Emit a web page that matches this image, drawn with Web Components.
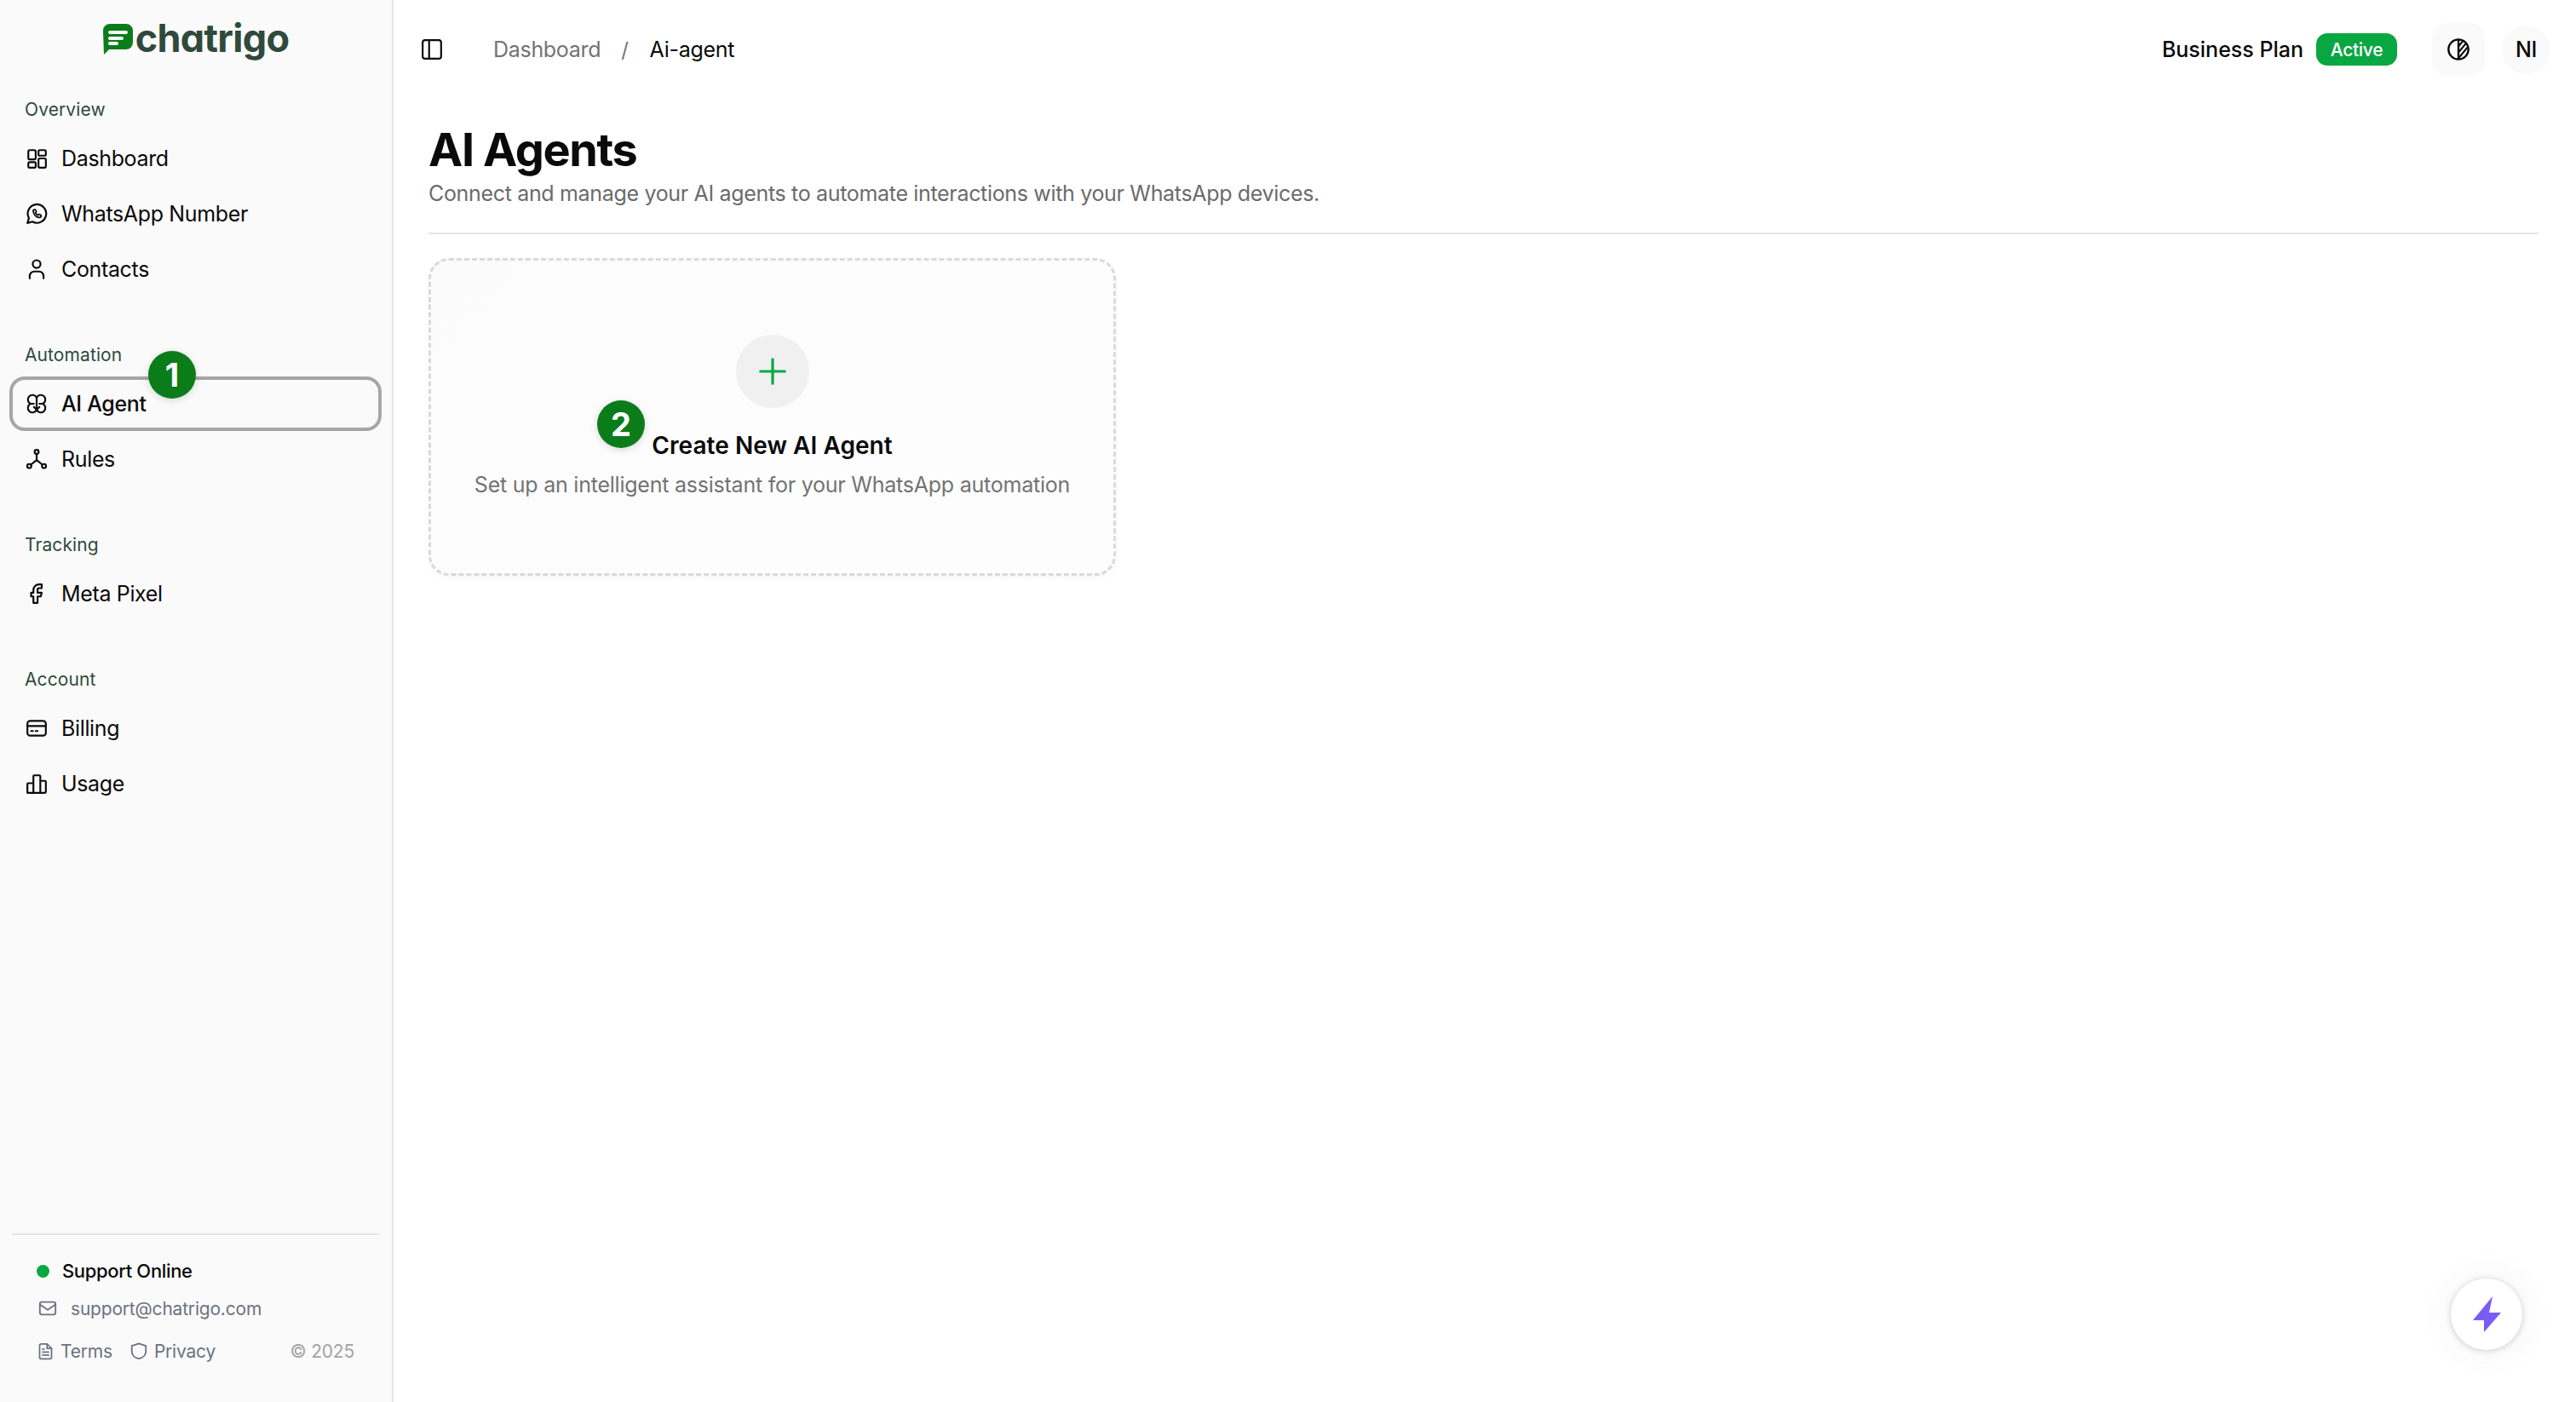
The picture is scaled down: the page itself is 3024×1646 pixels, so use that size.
<!DOCTYPE html>
<html>
<head>
<meta charset="utf-8">
<title>AI Agents</title>
<style>
  html, body { margin: 0; height: 100%; background: #fff; }
  body { font-family: Inter, "Liberation Sans", sans-serif; color: #0a0a0a; overflow: hidden; }
</style>
</head>
<body>
<app-shell>
  <app-sidebar slot="sidebar">
    <nav-section label="Overview">
      <nav-item icon="dashboard">Dashboard</nav-item>
      <nav-item icon="whatsapp">WhatsApp Number</nav-item>
      <nav-item icon="user">Contacts</nav-item>
    </nav-section>
    <nav-section label="Automation">
      <nav-item icon="brain" active>AI Agent<step-badge n="1" style="left:163px;top:-30px"></step-badge></nav-item>
      <nav-item icon="fork">Rules</nav-item>
    </nav-section>
    <nav-section label="Tracking">
      <nav-item icon="facebook">Meta Pixel</nav-item>
    </nav-section>
    <nav-section label="Account">
      <nav-item icon="card">Billing</nav-item>
      <nav-item icon="chart">Usage</nav-item>
    </nav-section>
  </app-sidebar>
  <app-header></app-header>
  <page-heading heading="AI Agents" sub="Connect and manage your AI agents to automate interactions with your WhatsApp devices."></page-heading>
  <agent-grid>
    <create-card heading="Create New AI Agent" sub="Set up an intelligent assistant for your WhatsApp automation"></create-card>
  </agent-grid>
  <fab-button></fab-button>
</app-shell>

<script>
const ICONS = {
  dashboard: '<rect x="3" y="3" width="8" height="10" rx="1.5"/><rect x="14" y="3" width="8" height="6" rx="1.5"/><rect x="14" y="12" width="8" height="10" rx="1.5"/><rect x="3" y="16" width="8" height="6" rx="1.5"/>',
  whatsapp: '<path d="M2 22l1.7-5.2A10 10 0 1 1 7.4 20.5z"/><path d="M8.5 9.5c0 3.5 3 6.5 6.5 6.5 1 0 1.8-.5 1.8-1.5v-1l-2.3-1-1 1c-1.2-.5-2.3-1.6-2.8-2.8l1-1-1-2.3h-1c-1 0-1.5.8-1.5 1.7z" stroke-width="1.6"/>',
  user: '<circle cx="12" cy="6.5" r="4.2"/><path d="M4.5 22v-2.5a5 5 0 0 1 5-5h5a5 5 0 0 1 5 5V22"/>',
  brain: '<path d="M12 5.3A5 5 0 1 0 5.3 12 5 5 0 1 0 12 18.7 5 5 0 1 0 18.7 12 5 5 0 1 0 12 5.3z"/><path d="M12 5.3v13.4M5.3 12H9M18.700 12H15M9 15.5l3 3 3-3"/>',
  fork: '<circle cx="12" cy="4.2" r="2.2"/><circle cx="4" cy="19.5" r="2.2"/><circle cx="20" cy="19.5" r="2.2"/><path d="M12 6.5V13M5.8 18l6.2-5 6.2 5"/>',
  facebook: '<path d="M8 22v-7H5.5v-4H8V8a6 6 0 0 1 6-6h3v4h-3a1.5 1.5 0 0 0-1.5 1.5V11H17l-1 4h-3.5v7z" transform="translate(0.5 0)"/>',
  card: '<rect x="2" y="4" width="20" height="16" rx="3"/><path d="M2 9.5h20M6 15h2M11 15h2"/>',
  chart: '<path d="M2 22V12.5a1 1 0 0 1 1-1h5.5V22zM8.5 22V4a1 1 0 0 1 1-1H15a1 1 0 0 1 1 1v18zM16 22V9h5a1 1 0 0 1 1 1v11a1 1 0 0 1-1 1H2"/>',
  panel: '<rect x="2" y="2" width="20" height="20" rx="2.5"/><path d="M9 2v20"/>',
  mail: '<rect x="2" y="4" width="20" height="16" rx="2.5"/><path d="M2 7l10 7 10-7"/>',
  file: '<path d="M14 2H6a2 2 0 0 0-2 2v16a2 2 0 0 0 2 2h12a2 2 0 0 0 2-2V8z"/><path d="M14 2v6h6M8 13h8M8 17h8M8 9h2"/>',
  shield: '<path d="M12 2.5l9 3v7c0 5-4 8.5-9 9.5-5-1-9-4.5-9-9.5v-7z"/>',
  plus: '<path d="M12 3v18M3 12h18"/>'
};

// generic stroke icon, size comes from the host
class AppIcon extends HTMLElement {
  static get observedAttributes() { return ['name']; }
  constructor() {
    super();
    this.attachShadow({ mode: 'open' });
  }
  attributeChangedCallback() { this.render(); }
  connectedCallback() { this.render(); }
  render() {
    this.shadowRoot.innerHTML = `
      <style>
        :host { display: inline-flex; flex: none; width: var(--icon-size, 24px); height: var(--icon-size, 24px); }
        svg { width: 100%; height: 100%; display: block; fill: none; stroke: currentColor; stroke-linecap: round; stroke-linejoin: round; }
      </style>
      <svg viewBox="0 0 24 24" stroke-width="2">${ICONS[this.getAttribute('name')] || ''}</svg>`;
  }
}
customElements.define('app-icon', AppIcon);

class AppShell extends HTMLElement {
  constructor() {
    super();
    this.attachShadow({ mode: 'open' }).innerHTML = `
      <style>
        :host { display: grid; grid-template-columns: 462px 1fr; height: 1646px; position: relative; }
        .side { grid-row: 1; grid-column: 1; display: flex; min-height: 0; }
        main { grid-column: 2; min-width: 0; display: flex; flex-direction: column; }
      </style>
      <div class="side"><slot name="sidebar"></slot></div>
      <main><slot></slot></main>`;
  }
}
customElements.define('app-shell', AppShell);

class AppSidebar extends HTMLElement {
  constructor() {
    super();
    this.attachShadow({ mode: 'open' }).innerHTML = `
      <style>
        :host { display: flex; flex-direction: column; width: 462px; box-sizing: border-box; height: 100%; background: #fafafa; border-right: 2px solid #e5e5e5; }
        .logo { height: 104px; flex: none; display: flex; align-items: flex-start; justify-content: center; gap: 3px; padding-top: 17px; box-sizing: border-box; }
        .logo svg { width: 35px; height: 36px; margin-top: 11px; flex: none; }
        .logo span { font: 700 45px/56px Inter, sans-serif; font-feature-settings: "cv11" 1; letter-spacing: -0.7px; color: #2f4a3c; }
        nav { display: flex; flex-direction: column; gap: 44px; }
        footer { margin: auto 15px 0 14px; border-top: 2px solid #e5e5e5; height: 198px; box-sizing: border-box; padding: 22px 0 0 29px; font-size: 21px; color: #6b7280; letter-spacing: -0.2px; }
        .row { display: flex; align-items: center; }
        .online { height: 40px; font-size: 22px; font-weight: 500; color: #0a0a0a; gap: 15px; letter-spacing: -0.35px; }
        .dot { width: 15px; height: 15px; border-radius: 50%; background: #09a742; }
        .email { height: 44px; margin-top: 2px; gap: 16px; padding-left: 2px; --icon-size: 22px; }
        .links { height: 44px; margin-top: 6px; padding-right: 29px; --icon-size: 21px; }
        .links span { display: inline-flex; align-items: center; gap: 7px; margin-right: 20px; }
        .links .shield { --icon-size: 22px; }
        .links .copy { margin: 0 0 0 auto; color: #a3a3a3; font-size: 21px; }
      </style>
      <div class="logo">
        <svg viewBox="0 0 35 36">
          <path d="M8 0h19a8 8 0 0 1 8 8v14a8 8 0 0 1-8 8H7L1 36 0 8a8 8 0 0 1 8-8z" fill="#0a7d1a"/>
          <path d="M8 8h19a2 2 0 0 1 0 4H8a2 2 0 0 1 0-4zM8 15h14a2 2 0 0 1 0 4H8a2 2 0 0 1 0-4zM8 21h8a2 2 0 0 1 0 4H8a2 2 0 0 1 0-4z" fill="#fafafa"/>
        </svg>
        <span>chatrigo</span>
      </div>
      <nav><slot></slot></nav>
      <footer>
        <div class="row online"><i class="dot"></i>Support Online</div>
        <div class="row email"><app-icon name="mail"></app-icon>support@chatrigo.com</div>
        <div class="row links">
          <span><app-icon name="file"></app-icon>Terms</span>
          <span class="shield"><app-icon name="shield"></app-icon>Privacy</span>
          <span class="copy">© 2025</span>
        </div>
      </footer>`;
  }
}
customElements.define('app-sidebar', AppSidebar);

class NavSection extends HTMLElement {
  constructor() {
    super();
    this.attachShadow({ mode: 'open' }).innerHTML = `
      <style>
        :host { display: flex; flex-direction: column; gap: 1px; padding: 0 12px 0 11px; }
        .label { height: 48px; margin-bottom: 1px; padding-left: 18px; display: flex; align-items: center; font-size: 21px; font-weight: 400; letter-spacing: 0.1px; color: #2f4a3c; }
      </style>
      <div class="label"></div>
      <slot></slot>`;
  }
  connectedCallback() {
    this.shadowRoot.querySelector('.label').textContent = this.getAttribute('label');
  }
}
customElements.define('nav-section', NavSection);

class NavItem extends HTMLElement {
  constructor() {
    super();
    this.attachShadow({ mode: 'open' }).innerHTML = `
      <style>
        :host { display: flex; position: relative; align-items: center; gap: 16px; height: 64px; box-sizing: border-box; padding-left: 19px; border-radius: 18px; font-size: 25px; letter-spacing: -0.35px; color: #0a0a0a; --icon-size: 26px; }
        :host([active]) { box-shadow: inset 0 0 0 4px #a6a6a6; font-weight: 500; }
      </style>
      <app-icon></app-icon>
      <slot></slot>`;
  }
  connectedCallback() {
    this.shadowRoot.querySelector('app-icon').setAttribute('name', this.getAttribute('icon'));
  }
}
customElements.define('nav-item', NavItem);

// numbered marker that sits over the page
class StepBadge extends HTMLElement {
  connectedCallback() {
    const root = this.shadowRoot || this.attachShadow({ mode: 'open' });
    root.innerHTML = `
      <style>
        :host { position: absolute; width: 56px; height: 56px; border-radius: 50%; background: #0a7d1a; color: #fff; display: flex; align-items: center; justify-content: center; font: 700 38px/1 Inter, sans-serif; letter-spacing: 0; box-shadow: 0 2px 8px rgba(0,0,0,.15); z-index: 5; }
      </style>${this.getAttribute('n')}`;
  }
}
customElements.define('step-badge', StepBadge);

class AppHeader extends HTMLElement {
  constructor() {
    super();
    this.attachShadow({ mode: 'open' }).innerHTML = `
      <style>
        :host { display: flex; align-items: center; height: 116px; flex: none; box-sizing: border-box; padding: 0 30px 0 32px; font-size: 25px; letter-spacing: -0.3px; }
        .panel { --icon-size: 26px; margin-right: 59px; }
        .crumb { color: #737373; }
        .sep { margin: 0 25px 0 24px; color: #737373; font-size: 24px; }
        .plan { margin-left: auto; font-weight: 500; letter-spacing: 0; }
        .badge { margin-left: 15px; height: 38px; width: 95px; border-radius: 13px; background: #09a742; color: #fff; font-size: 21px; font-weight: 500; display: flex; align-items: center; justify-content: center; }
        .theme { margin-left: 41px; width: 62px; height: 62px; border-radius: 18px; background: #fafafa; display: flex; align-items: center; justify-content: center; }
        .theme svg { width: 28px; height: 28px; }
        .me { margin-left: 20px; width: 57px; height: 57px; border-radius: 50%; background: #fafafa; display: flex; align-items: center; justify-content: center; font-weight: 500; }
      </style>
      <app-icon class="panel" name="panel"></app-icon>
      <span class="crumb">Dashboard</span><span class="sep">/</span><span>Ai-agent</span>
      <span class="plan">Business Plan</span>
      <span class="badge">Active</span>
      <div class="theme">
        <svg viewBox="0 0 24 24" fill="none" stroke="#0a0a0a" stroke-width="2">
          <circle cx="12" cy="12" r="10"/><path d="M12 2v20"/>
          <path d="M12 9l4.5-5.500M12 15l8-9.500M12 21l9-11" stroke-width="1.8"/>
        </svg>
      </div>
      <div class="me">NI</div>`;
  }
}
customElements.define('app-header', AppHeader);

class PageHeading extends HTMLElement {
  connectedCallback() {
    const root = this.shadowRoot || this.attachShadow({ mode: 'open' });
    root.innerHTML = `
      <style>
        :host { display: block; flex: none; margin: 0 44px 0 41px; height: 159px; box-sizing: border-box; padding-top: 25px; border-bottom: 2px solid #e5e5e5; }
        h1 { margin: 0; font-size: 54px; line-height: 70px; font-weight: 700; letter-spacing: -1.4px; color: #0a0a0a; }
        p { margin: 0; font-size: 25px; line-height: 32px; letter-spacing: -0.33px; color: #6b6b6b; }
      </style>
      <h1>${this.getAttribute('heading')}</h1>
      <p>${this.getAttribute('sub')}</p>`;
  }
}
customElements.define('page-heading', PageHeading);

class AgentGrid extends HTMLElement {
  constructor() {
    super();
    this.attachShadow({ mode: 'open' }).innerHTML = `
      <style>
        :host { display: grid; grid-template-columns: repeat(3, 807px); padding: 28px 44px 0 41px; }
      </style>
      <slot></slot>`;
  }
}
customElements.define('agent-grid', AgentGrid);

class CreateCard extends HTMLElement {
  connectedCallback() {
    const root = this.shadowRoot || this.attachShadow({ mode: 'open' });
    root.innerHTML = `
      <style>
        :host { display: flex; flex-direction: column; align-items: center; position: relative; height: 373px; box-sizing: border-box; padding-top: 87px; border: 3px dashed #d9d9d9; border-radius: 24px; background: linear-gradient(135deg, #fbfbfb, #fdfdfe 60%); box-shadow: 0 2px 6px rgba(0,0,0,.04); }
        .add { width: 86px; height: 86px; border-radius: 50%; background: #f0f0f0; color: #09a742; display: flex; align-items: center; justify-content: center; --icon-size: 38px; }
        h3 { margin: 24px 0 0; font-size: 28px; line-height: 40px; font-weight: 600; letter-spacing: 0.05px; color: #0a0a0a; }
        p { margin: 10px 0 0; font-size: 25px; line-height: 32px; letter-spacing: -0.23px; color: #737373; }
      </style>
      <div class="add"><app-icon name="plus"></app-icon></div>
      <h3>${this.getAttribute('heading')}</h3>
      <p>${this.getAttribute('sub')}</p>
      <step-badge n="2" style="left:195px;top:164px"></step-badge>`;
  }
}
customElements.define('create-card', CreateCard);

class FabButton extends HTMLElement {
  constructor() {
    super();
    this.attachShadow({ mode: 'open' }).innerHTML = `
      <style>
        :host { position: absolute; right: 63px; bottom: 61px; width: 84px; height: 84px; border-radius: 50%; background: #fff; box-sizing: border-box; display: flex; align-items: center; justify-content: center; box-shadow: 0 1px 7px rgba(0,0,0,.18), 0 0 44px rgba(70,70,130,.07); }
        svg { width: 33px; height: 42px; }
      </style>
      <svg viewBox="0 0 33 42"><path d="M23 0L0 28h13v14L33 19H19z" fill="#7a5cf5"/></svg>`;
  }
}
customElements.define('fab-button', FabButton);
</script>
</body>
</html>
